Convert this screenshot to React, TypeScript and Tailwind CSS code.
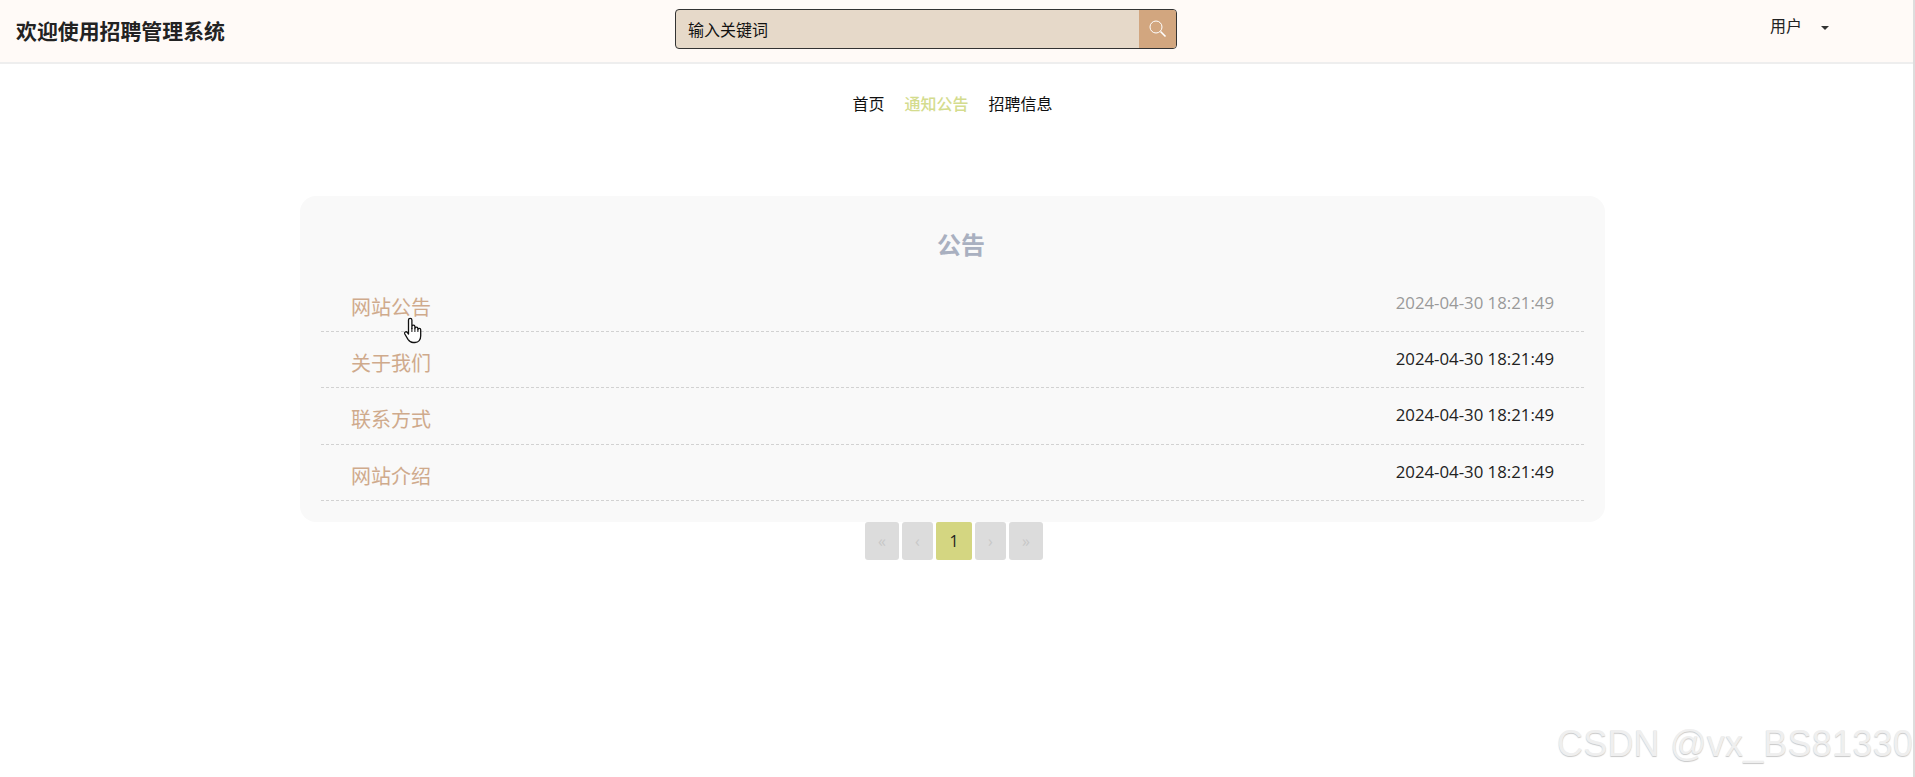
import React from 'react';

const notices = [
  { id: 1, title: '网站公告', time: '2024-04-30 18:21:49', hover: true },
  { id: 2, title: '关于我们', time: '2024-04-30 18:21:49' },
  { id: 3, title: '联系方式', time: '2024-04-30 18:21:49' },
  { id: 4, title: '网站介绍', time: '2024-04-30 18:21:49' },
];

const font = "font-['Open_Sans','Noto_Sans_CJK_SC',sans-serif]";

const App = () => {
  return (
    <div className={`relative flex h-[777px] overflow-hidden bg-white text-[#222] ${font}`}>
      <div className="min-w-0 flex-1">
        {/* 顶部栏 */}
        <header className="flex h-[64px] items-start border-b-2 border-[#eeeeee] bg-[#fffaf7]">
          <h1 className="mt-[16px] ml-[16px] w-[210px] text-[20.9px] leading-[30px] font-bold whitespace-nowrap text-[#222]">
            欢迎使用招聘管理系统
          </h1>
          <div className="mt-[9px] ml-[449px] flex h-[40px] w-[502px] overflow-hidden rounded-[4px] border border-[#333] bg-[#e6d9c9]">
            <div className="flex-1 pl-[12px] text-[16px] leading-[40px] text-[#111]">输入关键词</div>
            <div className="flex w-[37px] items-center justify-center bg-[#d2a67f]">
              <svg width="18" height="18" viewBox="0 0 18 18" fill="none" stroke="#fff" strokeWidth="1">
                <circle cx="7" cy="7" r="6" />
                <path d="M11.5 11.5l5 5" strokeWidth="1.6" />
              </svg>
            </div>
          </div>
          <div className="mt-[14px] ml-[593px] flex items-center text-[16px] leading-[24px] text-[#222]">
            <span>用户</span>
            <span className="mt-[4px] ml-[19px] h-0 w-0 border-x-[4px] border-t-[4px] border-x-transparent border-t-[#333]" />
          </div>
        </header>

        {/* 导航 */}
        <nav className="mt-[26px] flex justify-center gap-[20px] pr-[8px] text-[16px] leading-[28px] text-[#111]">
          <a>首页</a>
          <a className="font-medium text-[#d4dc8e]">通知公告</a>
          <a>招聘信息</a>
        </nav>

        {/* 公告列表 */}
        <main className="mt-[78px] ml-[300px] w-[1305px]">
          <section className="h-[326px] rounded-[16px] bg-[#f9f9f9] px-[21px] pt-[32px]">
            <h2 className="h-[48px] pl-[17px] text-center text-[24px] leading-[34px] font-bold text-[#a9b0c0]">公告</h2>
            <ul>
              {notices.map((n) => (
                <li key={n.id} className="flex h-[56.2px] items-start justify-between border-b border-dashed border-[#d2d2d2] px-[30px]">
                  <span className="mt-[17px] text-[20px] leading-[30px] text-[#cfaa8c]">{n.title}</span>
                  <span className={`mt-[14px] text-[16.8px] leading-[26px] ${n.hover ? 'text-[#999]' : 'text-[#222]'}`}>{n.time}</span>
                </li>
              ))}
            </ul>
          </section>

          {/* 分页 */}
          <div className="flex justify-center gap-[3px] pl-[3px] text-[16px]">
            <span className="flex h-[38px] w-[34px] items-center justify-center rounded-[3px] bg-[#dcdcdc] text-[#c8c8c8]">«</span>
            <span className="flex h-[38px] w-[31px] items-center justify-center rounded-[3px] bg-[#dcdcdc] text-[#c8c8c8]">‹</span>
            <span className="flex h-[38px] w-[36px] items-center justify-center rounded-[2px] bg-[#d4d681] text-[#222]">1</span>
            <span className="flex h-[38px] w-[31px] items-center justify-center rounded-[3px] bg-[#dcdcdc] text-[#c8c8c8]">›</span>
            <span className="flex h-[38px] w-[34px] items-center justify-center rounded-[3px] bg-[#dcdcdc] text-[#c8c8c8]">»</span>
          </div>
        </main>
      </div>

      {/* 滚动条边缘 */}
      <div className="w-[2px] bg-[#dddddd]" />

      {/* 鼠标指针 */}
      <svg className="absolute top-[317px] left-[403px]" width="20" height="27" viewBox="0 0 20 27" fill="#fff" stroke="#111" strokeWidth="1.3" strokeLinejoin="round">
        <path d="M5.5 3a1.7 1.7 0 0 1 3.4 0v8.5V9.7a1.5 1.5 0 0 1 3 0v2a1.5 1.5 0 0 1 3 0v1a1.4 1.4 0 0 1 2.8 0v6c0 4-2.2 6.8-5.7 6.8h-2c-2.5 0-3.5-1-5-3.2l-3.2-5.3c-.9-1.6 1.2-3 2.4-1.6l1.3 1.6z" />
        <path d="M8.9 11v4M11.9 11.5v3.5M14.9 12.5v2.5" fill="none" strokeWidth="1" />
      </svg>

      {/* 水印 */}
      <div className="absolute top-[722px] left-[1557px] font-['Liberation_Sans',sans-serif] text-[36px] leading-[44px] tracking-[0.2px] whitespace-nowrap text-[#efefef] [text-shadow:0_1px_1px_#c8c8c8]">
        CSDN @vx_BS81330
      </div>
    </div>
  );
};

export default App;
